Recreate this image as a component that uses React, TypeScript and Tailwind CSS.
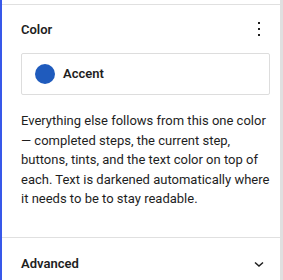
import React from "react";

export default function App() {
  return (
    <div
      className="flex w-[283px] h-[280px] bg-white text-[#1e1e1e] overflow-hidden"
      style={{ fontFamily: 'Roboto, "Noto Sans", sans-serif' }}
    >
      <div className="w-[2px] shrink-0 bg-[#3858e9]" />
      <div className="flex-1 pt-[4px] flex flex-col">
        <div className="border-t border-[#e0e0e0] pl-[19px] pr-[10px] pt-[12px] pb-[28px]">
          <div className="flex items-center justify-between h-[24px]">
            <h2 className="text-[13px] font-semibold leading-none">Color</h2>
            <button className="w-[24px] h-[24px] flex items-center justify-center mr-[-1px]">
              <svg width="24" height="24" viewBox="0 0 24 24" fill="currentColor">
                <rect x="11" y="5" width="2" height="2" />
                <rect x="11" y="11" width="2" height="2" />
                <rect x="11" y="17" width="2" height="2" />
              </svg>
            </button>
          </div>
          <div className="mt-[12px] h-[42px] border border-[#dddddd] rounded-[2px] flex items-center pl-[13px] gap-[8px]">
            <span className="w-[20px] h-[20px] rounded-full bg-[#1f5bbd]" />
            <span className="text-[13px] font-semibold">Accent</span>
          </div>
          <p className="mt-[16px] text-[13px] leading-[19.5px]">
            Everything else follows from this one color — completed steps, the current step, buttons, tints, and the text color on top of each. Text is darkened automatically where it needs to be to stay readable.
          </p>
        </div>
        <div className="border-t border-[#e0e0e0] pl-[19px] pr-[10px] pt-[14px] flex justify-between h-[52px] items-start">
          <span className="text-[13px] font-semibold leading-[24px]">Advanced</span>
          <svg width="24" height="24" viewBox="0 0 24 24" className="mr-[-1px]">
            <path d="M8 10.5l4 3.5 4-3.5" fill="none" stroke="#1e1e1e" strokeWidth="1.5" />
          </svg>
        </div>
      </div>
      <div className="w-[3px] shrink-0 bg-[#e0e0e0]" />
    </div>
  );
}
